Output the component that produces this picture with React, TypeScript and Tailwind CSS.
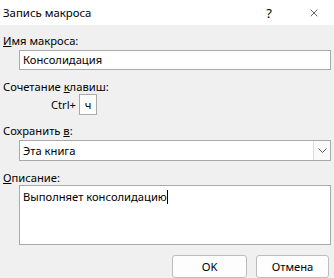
import { X } from "lucide-react";

export default function App() {
  return (
    <div
      className="w-[334px] h-[278px] bg-[#f0f0f0] text-[11.2px] text-black overflow-hidden flex flex-col"
      style={{ fontFamily: '"Segoe UI", "Noto Sans", sans-serif' }}
    >
      {/* title bar */}
      <div className="h-[25px] bg-white flex items-center pl-[3px] pr-[14px] shrink-0">
        <span className="flex-1 leading-4 text-[11.4px]">Запись макроса</span>
        <span className="text-[13px] leading-4 mr-[36px]">?</span>
        <X className="w-[12px] h-[12px]" strokeWidth={1.2} />
      </div>

      <div className="flex flex-col pl-[3px] pr-[3px] pt-[8px]">
        <span className="leading-4">
          <span className="underline">И</span>мя макроса:
        </span>
        <div className="ml-[16px] mt-[1px] h-[20px] border border-[#a9a9a9] bg-white flex items-center px-[3px] leading-4">
          Консолидация
        </div>

        <span className="leading-4 mt-[9px]">
          Сочетание <span className="underline">к</span>лавиш:
        </span>
        <div className="flex items-center ml-[48px] mt-[-1px]">
          <span className="leading-4 mr-[3px]">Ctrl+</span>
          <div className="w-[18px] h-[21px] border border-[#a9a9a9] bg-white flex items-center justify-center leading-4">
            ч
          </div>
        </div>

        <span className="leading-4 mt-[8px]">
          Сохранить <span className="underline">в</span>:
        </span>
        <div className="ml-[16px] mt-[1px] h-[21px] border border-[#a9a9a9] bg-white flex items-stretch leading-4">
          <span className="flex-1 flex items-center px-[3px]">Эта книга</span>
          <div className="w-[17px] border-l border-[#dcdcdc] bg-[#fafafa] flex items-center justify-center">
            <svg width="9" height="5" viewBox="0 0 9 5" fill="none">
              <path d="M0.5 0.5 L4.5 4.5 L8.5 0.5" stroke="#606060" strokeWidth="1" />
            </svg>
          </div>
        </div>

        <span className="leading-4 mt-[9px]">
          <span className="underline">О</span>писание:
        </span>
        <div className="ml-[16px] mt-[-1px] h-[60px] border border-[#a9a9a9] bg-white px-[3px] pt-[3px] leading-4">
          Выполняет консолидацию
          <span className="inline-block w-px h-[14px] bg-black align-[-3px]" />
        </div>

        <div className="flex justify-end gap-[9px] mt-[10px] mr-[2px]">
          <button className="w-[75px] h-[23px] border border-[#bcbcbc] rounded-[3px] bg-[#fdfdfd] leading-4">
            OK
          </button>
          <button className="w-[73px] h-[23px] border border-[#bcbcbc] rounded-[3px] bg-[#fdfdfd] leading-4">
            Отмена
          </button>
        </div>
      </div>
    </div>
  );
}
